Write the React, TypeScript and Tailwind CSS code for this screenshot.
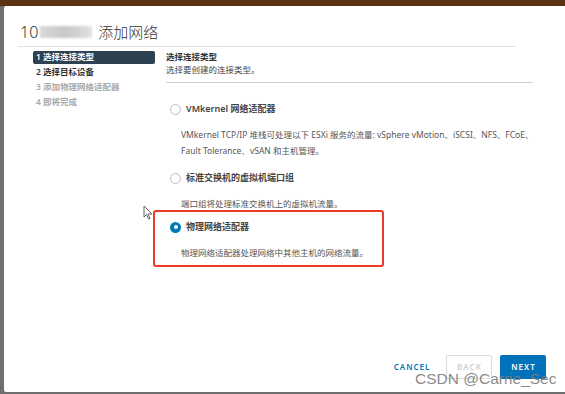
import React from "react";

const font = { fontFamily: '"Noto Sans", "Noto Sans CJK SC", sans-serif' };

function Radio({ checked }: { checked?: boolean }) {
  return checked ? (
    <span className="w-[11px] h-[11px] rounded-full bg-[#0079b8] flex items-center justify-center shrink-0">
      <span className="w-[4px] h-[4px] rounded-full bg-white" />
    </span>
  ) : (
    <span className="w-[11px] h-[11px] rounded-full border border-[#bdbdbd] bg-white shrink-0" />
  );
}

function Option({ label, lines, checked }: { label: string; lines: string[]; checked?: boolean }) {
  return (
    <div className="flex flex-col">
      <div className="flex items-center gap-[5px] h-[14px]">
        <Radio checked={checked} />
        <span className="text-[9px] font-semibold text-[#444]">{label}</span>
      </div>
      <div className="pl-[11px] mt-[11px] flex flex-col">
        {lines.map((l) => (
          <div key={l} className="h-[16px] flex items-center text-[8.5px] text-[#565656] whitespace-nowrap">
            {l}
          </div>
        ))}
      </div>
    </div>
  );
}

export default function App() {
  const steps = ["1 选择连接类型", "2 选择目标设备", "3 添加物理网络适配器", "4 即将完成"];
  return (
    <div className="w-[565px] h-[394px] bg-[#6f6f6f] flex flex-col overflow-hidden relative" style={font}>
      <div className="h-[6px] bg-[#5b3411] shrink-0" />
      <div className="flex-1 flex pl-[4px] pr-[5px] pb-[2px]">
        <div className="flex-1 bg-white rounded-[2px] flex flex-col pt-[14px] px-[14px] relative">
          {/* title */}
          <div className="flex items-center h-[24px] pl-[2px] text-[15px] text-[#333] font-light">
            <span className="text-[16px]">10</span>
            <span className="w-[52px] h-[12px] ml-[2px] mr-[6px] bg-gradient-to-r from-[#d8d8d8] via-[#c8c8c8] to-[#e2e2e2] blur-[1px]" />
            <span>添加网络</span>
          </div>
          <div className="h-px bg-[#e3e3e3] mt-[2px] mr-[37px]" />

          <div className="flex flex-1 mt-[4px]">
            {/* nav */}
            <div className="w-[148px] pl-[15px] flex flex-col shrink-0">
              {steps.map((s, i) => (
                <div
                  key={s}
                  className={`h-[13px] mb-[2px] px-[3px] flex items-center text-[8.5px] font-semibold rounded-[2px] w-[122px] ${
                    i === 0
                      ? "bg-[#2d4150] text-white"
                      : i === 1
                      ? "text-[#333]"
                      : "text-[#aaa]"
                  }`}
                >
                  {s}
                </div>
              ))}
            </div>

            {/* content */}
            <div className="flex-1 flex flex-col pr-[20px]">
              <div className="text-[8.5px] font-semibold text-[#333] leading-[12px]">选择连接类型</div>
              <div className="text-[8.5px] text-[#444] leading-[13px]">选择要创建的连接类型。</div>
              <div className="h-px bg-[#cfcfcf] mt-[6px]" />

              <div className="pl-[4px] mt-[19px] flex flex-col">
                <Option
                  label="VMkernel 网络适配器"
                  lines={[
                    "VMkernel TCP/IP 堆栈可处理以下 ESXi 服务的流量: vSphere vMotion、iSCSI、NFS、FCoE、",
                    "Fault Tolerance、vSAN 和主机管理。",
                  ]}
                />
                <div className="mt-[12px]">
                  <Option label="标准交换机的虚拟机端口组" lines={["端口组将处理标准交换机上的虚拟机流量。"]} />
                </div>
                <div className="-mt-[2px] -ml-[17px] w-[231px] h-[57px] border-[2px] border-[#f03a24] rounded-[3px] pl-[15px] pt-[8px]">
                  <Option checked label="物理网络适配器" lines={["物理网络适配器处理网络中其他主机的网络流量。"]} />
                </div>
              </div>

              <div className="flex-1" />
              <div className="flex items-center justify-end gap-[8px] pb-[13px] -mr-[13px]">
                <span className="text-[8px] font-semibold tracking-[1px] text-[#0079b8] mr-[8px]">CANCEL</span>
                <span className="w-[46px] h-[24px] border border-[#dcdcdc] rounded-[2px] flex items-center justify-center text-[8px] font-semibold tracking-[1px] text-[#cfcfcf]">
                  BACK
                </span>
                <span className="w-[46px] h-[24px] bg-[#0072bb] rounded-[2px] flex items-center justify-center text-[8px] font-semibold tracking-[1px] text-white">
                  NEXT
                </span>
              </div>
            </div>
          </div>
        </div>
      </div>

      {/* watermark */}
      <div
        className="absolute left-[415px] top-[369px] text-[15.5px] leading-[20px] text-[#7a7a7a]/90"
        style={{ fontFamily: '"Liberation Sans", Arial, sans-serif' }}
      >
        CSDN @Carrie_Sec
      </div>

      {/* cursor */}
      <svg className="absolute left-[143px] top-[205px]" width="11" height="15" viewBox="0 0 11 15">
        <path d="M1 1 L1 12 L3.5 9.5 L5.5 14 L7 13.3 L5 9 L9 9 Z" fill="white" stroke="#555" strokeWidth="0.9" />
      </svg>
    </div>
  );
}
